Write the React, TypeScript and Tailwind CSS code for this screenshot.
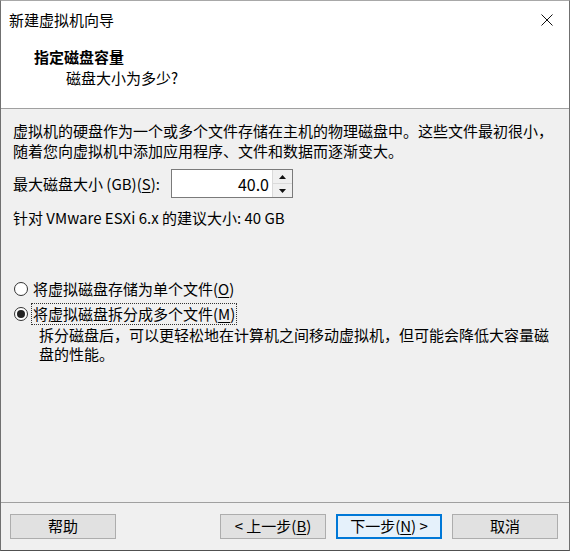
import React, { useState } from "react";

const font = { fontFamily: '"Noto Sans CJK SC", "Noto Sans", sans-serif' };

function U({ children }: { children: React.ReactNode }) {
  return <span className="underline underline-offset-2">{children}</span>;
}

function Radio({ checked }: { checked: boolean }) {
  return (
    <span className="flex h-[14px] w-[14px] shrink-0 items-center justify-center rounded-full border border-[#333] bg-white">
      {checked && <span className="h-[8px] w-[8px] rounded-full bg-[#222]" />}
    </span>
  );
}

function Btn({ children, primary }: { children: React.ReactNode; primary?: boolean }) {
  return (
    <button
      className={
        primary
          ? "flex h-[25px] w-[106px] items-center justify-center border-2 border-[#0078d7] bg-[#e5f1fb] text-[15px] text-black"
          : "flex h-[25px] w-[106px] items-center justify-center border border-[#adadad] bg-[#e1e1e1] text-[15px] text-black"
      }
    >
      {children}
    </button>
  );
}

export default function App() {
  const [split, setSplit] = useState(true);

  return (
    <div
      className="flex h-[551px] w-[570px] flex-col border border-t-[#a8a8a8] border-x-[#707070] border-b-[#505050] bg-[#f0f0f0] text-black"
      style={font}
    >
      {/* top white part */}
      <div className="h-[108px] border-b border-[#a0a0a0] bg-white">
        <div className="flex h-[38px] items-center justify-between pl-[8px] pr-[16px]">
          <span className="text-[15px]">新建虚拟机向导</span>
          <svg width="12" height="12" viewBox="0 0 12 12">
            <path d="M0.5 0.5 L11.5 11.5 M11.5 0.5 L0.5 11.5" stroke="#111" strokeWidth="1" />
          </svg>
        </div>
        <div className="pl-[33px] pt-[8px] text-[15px] font-bold leading-[20px]">指定磁盘容量</div>
        <div className="pl-[65px] pt-[1px] text-[15px] leading-[20px]">磁盘大小为多少?</div>
      </div>

      {/* body */}
      <div className="flex-1 px-[12px] pt-[12px] text-[15px] leading-[20px]">
        <p>虚拟机的硬盘作为一个或多个文件存储在主机的物理磁盘中。这些文件最初很小，随着您向虚拟机中添加应用程序、文件和数据而逐渐变大。</p>

        <div className="mt-[8px] flex items-center">
          <span className="w-[158px] shrink-0">
            最大磁盘大小 (GB)(<U>S</U>):
          </span>
          <div className="flex h-[29px] w-[122px] border border-[#7a7a7a] bg-white">
            <div className="flex flex-1 items-center justify-end pr-[3px] text-[16px]">40.0</div>
            <div className="flex w-[20px] flex-col border-l border-[#dadada]">
              <div className="flex flex-1 items-center justify-center border-b border-[#dadada] bg-[#f0f0f0]">
                <svg width="7" height="4" viewBox="0 0 7 4"><path d="M0 4 L3.5 0 L7 4 Z" fill="#111" /></svg>
              </div>
              <div className="flex flex-1 items-center justify-center bg-[#f0f0f0]">
                <svg width="7" height="4" viewBox="0 0 7 4"><path d="M0 0 L3.5 4 L7 0 Z" fill="#111" /></svg>
              </div>
            </div>
          </div>
        </div>

        <p className="mt-[10px]">针对 VMware ESXi 6.x 的建议大小: 40 GB</p>

        <div className="mt-[51px] flex items-center gap-[5px] pl-[1px]" onClick={() => setSplit(false)}>
          <Radio checked={!split} />
          <span>
            将虚拟磁盘存储为单个文件(<U>O</U>)
          </span>
        </div>
        <div className="mt-[4px] flex items-center gap-[3px] pl-[1px]" onClick={() => setSplit(true)}>
          <Radio checked={split} />
          <span className="border border-dotted border-[#333] px-[1px]">
            将虚拟磁盘拆分成多个文件(<U>M</U>)
          </span>
        </div>
        <p className="mt-[0px] pl-[26px] leading-[19px]">
          拆分磁盘后，可以更轻松地在计算机之间移动虚拟机，但可能会降低大容量磁盘的性能。
        </p>
      </div>

      {/* footer */}
      <div className="flex h-[48px] items-start border-t border-[#a0a0a0] pt-[11px] pl-[9px] pr-[11px]">
        <Btn>帮助</Btn>
        <div className="ml-auto flex gap-[10px]">
          <Btn>
            &lt; 上一步(<U>B</U>)
          </Btn>
          <Btn primary>
            下一步(<U>N</U>) &gt;
          </Btn>
          <Btn>取消</Btn>
        </div>
      </div>
    </div>
  );
}
